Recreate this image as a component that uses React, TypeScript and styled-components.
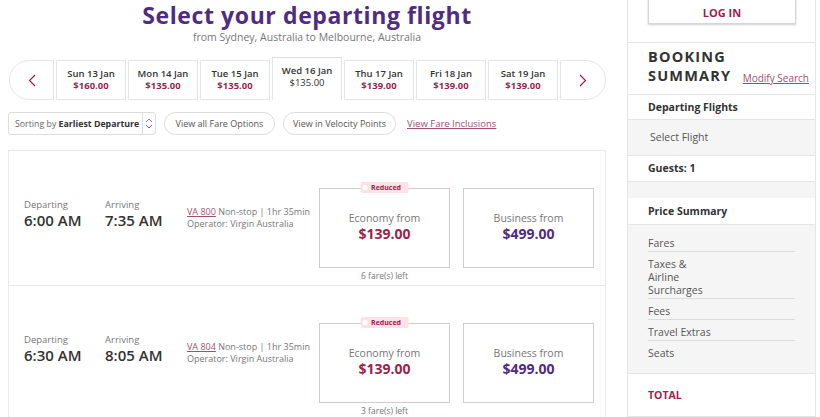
import React from "react";
import styled, { createGlobalStyle } from "styled-components";

const Global = createGlobalStyle`
  html, body { margin: 0; padding: 0; background: #fff; }
  body { font-family: "Open Sans", "DejaVu Sans", sans-serif; color: #333; width: 820px; height: 417px; overflow: hidden; }
  * { box-sizing: border-box; }
`;

const MAROON = "#9e1f4c";
const PURPLE = "#4f2c82";

const Page = styled.div`
  display: flex;
  align-items: flex-start;
  padding-left: 8px;
  gap: 21px;
`;

const Main = styled.main`
  width: 598px;
  display: flex;
  flex-direction: column;
`;

const Title = styled.h1`
  margin: 0;
  text-align: center;
  font-size: 23px;
  line-height: 31px;
  font-weight: 700;
  color: ${PURPLE};
  letter-spacing: 0.6px;
`;

const Subtitle = styled.p`
  margin: -1px 0 0;
  text-align: center;
  font-size: 10.5px;
  line-height: 14px;
  color: #777;
`;

const Strip = styled.div`
  margin-top: 13px;
  height: 43px;
  display: flex;
  align-items: flex-end;
  gap: 2px;
  padding-left: 1px;
`;

const ArrowBtn = styled.button<{ $side: "left" | "right" }>`
  width: ${(p) => (p.$side === "left" ? 45 : 46)}px;
  height: 40px;
  background: #fff;
  border: 1px solid #e6e6e6;
  border-radius: ${(p) => (p.$side === "left" ? "20px 0 0 20px" : "0 20px 20px 0")};
  display: flex;
  align-items: center;
  justify-content: center;
  padding: 0;
`;

const DateCell = styled.div<{ $active?: boolean }>`
  width: 70px;
  height: ${(p) => (p.$active ? 43 : 40)}px;
  border: 1px solid #e6e6e6;
  ${(p) => (p.$active ? "border-bottom: none; border-top-color: #ddd;" : "")}
  background: #fff;
  display: flex;
  flex-direction: column;
  align-items: center;
  justify-content: center;
  padding-bottom: ${(p) => (p.$active ? 5 : 0)}px;
`;

const DateLabel = styled.span`
  font-size: 9.5px;
  line-height: 12px;
  font-weight: 600;
  color: #333;
`;

const DatePrice = styled.span<{ $active?: boolean }>`
  font-size: 9.5px;
  line-height: 12px;
  font-weight: ${(p) => (p.$active ? 400 : 700)};
  color: ${(p) => (p.$active ? "#333" : MAROON)};
`;

const Toolbar = styled.div`
  margin-top: 12px;
  height: 23px;
  display: flex;
  align-items: center;
  gap: 8px;
`;

const Select = styled.div`
  width: 148px;
  height: 23px;
  border: 1px solid #ddd;
  border-radius: 3px;
  display: flex;
  align-items: center;
  font-size: 8.8px;
  color: #666;
`;

const SelectText = styled.span`
  flex: 1;
  padding-left: 6px;
  white-space: nowrap;
  b { color: #333; font-weight: 700; }
`;

const SelectIcon = styled.span`
  width: 13px;
  height: 100%;
  border-left: 1px solid #ddd;
  display: flex;
  align-items: center;
  justify-content: center;
`;

const Pill = styled.button<{ $w: number }>`
  width: ${(p) => p.$w}px;
  height: 23px;
  border: 1px solid #ddd;
  border-radius: 12px;
  background: #fff;
  font-family: inherit;
  font-size: 9px;
  color: #555;
  padding: 0;
  white-space: nowrap;
`;

const TextLink = styled.a<{ $size?: number }>`
  font-size: ${(p) => p.$size ?? 9.5}px;
  color: #a0506f;
  text-decoration: underline;
  white-space: nowrap;
`;

const List = styled.div`
  margin-top: 15px;
  border: 1px solid #e9e9e9;
  border-bottom: none;
`;

const Row = styled.div`
  height: 135px;
  display: flex;
  align-items: flex-start;
  padding: 30px 0 0 15px;
  border-bottom: 1px solid #e9e9e9;
`;

const TimeCol = styled.div<{ $w: number }>`
  width: ${(p) => p.$w}px;
  padding-top: 17px;
  display: flex;
  flex-direction: column;
`;

const TimeLabel = styled.span`
  font-size: 9.5px;
  line-height: 13px;
  color: #777;
`;

const TimeValue = styled.span`
  font-size: 15px;
  line-height: 19px;
  font-weight: 600;
  color: #333;
  white-space: nowrap;
`;

const InfoCol = styled.div`
  width: 132px;
  padding-top: 25px;
  font-size: 9px;
  line-height: 12px;
  color: #777;
  white-space: nowrap;
  a { color: #a0506f; text-decoration: underline; }
`;

const FareCol = styled.div`
  width: 131px;
  padding-top: 7px;
  display: flex;
  flex-direction: column;
  align-items: center;
  & + & { margin-left: 13px; }
`;

const FareBox = styled.div<{ $tone: "eco" | "bus" }>`
  position: relative;
  width: 100%;
  height: 80px;
  border: 1px solid ${(p) => (p.$tone === "eco" ? "#d9c9ce" : "#cfcfcf")};
  display: flex;
  flex-direction: column;
  align-items: center;
  justify-content: center;
  padding-bottom: 2px;
`;

const FareLabel = styled.span`
  font-size: 10.5px;
  line-height: 14px;
  color: #777;
`;

const FarePrice = styled.span<{ $tone: "eco" | "bus" }>`
  font-size: 14px;
  line-height: 18px;
  font-weight: 700;
  color: ${(p) => (p.$tone === "eco" ? MAROON : PURPLE)};
`;

const Tag = styled.span`
  position: absolute;
  top: -7px;
  left: 50%;
  transform: translateX(-50%);
  height: 11px;
  padding: 0 8px 0 11px;
  background: #fbe2e7;
  border-radius: 2px;
  font-size: 7px;
  line-height: 11px;
  font-weight: 700;
  color: ${MAROON};
  white-space: nowrap;
  &::before {
    content: "";
    position: absolute;
    left: 2px;
    top: 3px;
    width: 5px;
    height: 5px;
    border-radius: 50%;
    background: #fff;
  }
`;

const FaresLeft = styled.span`
  margin-top: 2px;
  font-size: 8.5px;
  line-height: 12px;
  color: #777;
`;

const Sidebar = styled.aside`
  width: 189px;
  height: 417px;
  border-left: 1px solid #e6e6e6;
  border-right: 1px solid #e6e6e6;
  display: flex;
  flex-direction: column;
`;

const LoginWrap = styled.div`
  height: 43px;
  padding-left: 20px;
  border-bottom: 1px solid #e6e6e6;
`;

const LoginBtn = styled.button`
  width: 148px;
  height: 25px;
  margin-top: -3px;
  background: #fff;
  border: 1px solid #d6d6d6;
  box-shadow: 0 1px 2px rgba(0,0,0,0.2);
  font-family: inherit;
  font-size: 11px;
  font-weight: 700;
  color: ${MAROON};
  padding: 3px 0 0;
  line-height: 20px;
`;

const BookingHead = styled.div`
  height: 52px;
  padding: 5px 6px 9px 20px;
  display: flex;
  align-items: flex-end;
  justify-content: space-between;
  border-bottom: 1px solid #e6e6e6;
`;

const BookingTitle = styled.h2`
  margin: 0;
  font-size: 14.5px;
  line-height: 19px;
  font-weight: 700;
  letter-spacing: 1.2px;
  color: #333;
`;

const Section = styled.div<{ $h: number; $grey?: boolean }>`
  height: ${(p) => p.$h}px;
  background: ${(p) => (p.$grey ? "#f5f5f5" : "#fff")};
  border-bottom: 1px solid #e6e6e6;
  display: flex;
  align-items: center;
  padding-left: 20px;
`;

const SectionTitle = styled.span<{ $color?: string }>`
  font-size: 10.5px;
  font-weight: 700;
  color: ${(p) => p.$color ?? "#333"};
`;

const PlainText = styled.span`
  font-size: 10.5px;
  color: #555;
  padding-left: 2px;
`;

const Gap = styled.div`
  height: 16px;
  background: #f5f5f5;
`;

const PriceList = styled.div`
  height: 150px;
  background: #f5f5f5;
  border-bottom: 1px solid #e6e6e6;
  padding: 12px 0 0 20px;
`;

const PriceItem = styled.div<{ $last?: boolean }>`
  width: 147px;
  padding: 0 0 1px;
  border-bottom: ${(p) => (p.$last ? "none" : "1px solid #dcdcdc")};
  font-size: 10.5px;
  line-height: 13px;
  color: #555;
  & + & { margin-top: 6px; }
`;

const Chevron = ({ dir }: { dir: "left" | "right" }) => (
  <svg width="8" height="13" viewBox="0 0 8 13" fill="none">
    <polyline
      points={dir === "left" ? "7,1 1.5,6.5 7,12" : "1,1 6.5,6.5 1,12"}
      stroke={MAROON}
      strokeWidth="1.2"
    />
  </svg>
);

const UpDown = () => (
  <svg width="8" height="13" viewBox="0 0 8 13" fill="none">
    <polyline points="1,5 4,2 7,5" stroke="#888" strokeWidth="1" />
    <polyline points="1,8 4,11 7,8" stroke="#a0506f" strokeWidth="1" />
  </svg>
);

const dates = [
  { d: "Sun 13 Jan", p: "$160.00" },
  { d: "Mon 14 Jan", p: "$135.00" },
  { d: "Tue 15 Jan", p: "$135.00" },
  { d: "Wed 16 Jan", p: "$135.00", active: true },
  { d: "Thu 17 Jan", p: "$139.00" },
  { d: "Fri 18 Jan", p: "$139.00" },
  { d: "Sat 19 Jan", p: "$139.00" },
];

const flights = [
  { dep: "6:00 AM", arr: "7:35 AM", no: "VA 800", left: 6 },
  { dep: "6:30 AM", arr: "8:05 AM", no: "VA 804", left: 3 },
];

export default function App() {
  return (
    <>
      <Global />
      <Page>
        <Main>
          <Title>Select your departing flight</Title>
          <Subtitle>from Sydney, Australia to Melbourne, Australia</Subtitle>
          <Strip>
            <ArrowBtn $side="left"><Chevron dir="left" /></ArrowBtn>
            {dates.map((x) => (
              <DateCell key={x.d} $active={x.active}>
                <DateLabel>{x.d}</DateLabel>
                <DatePrice $active={x.active}>{x.p}</DatePrice>
              </DateCell>
            ))}
            <ArrowBtn $side="right"><Chevron dir="right" /></ArrowBtn>
          </Strip>
          <Toolbar>
            <Select>
              <SelectText>Sorting by <b>Earliest Departure</b></SelectText>
              <SelectIcon><UpDown /></SelectIcon>
            </Select>
            <Pill $w={111}>View all Fare Options</Pill>
            <Pill $w={113}>View in Velocity Points</Pill>
            <TextLink style={{ marginLeft: 3 }}>View Fare Inclusions</TextLink>
          </Toolbar>
          <List>
            {flights.map((f) => (
              <Row key={f.no}>
                <TimeCol $w={81}>
                  <TimeLabel>Departing</TimeLabel>
                  <TimeValue>{f.dep}</TimeValue>
                </TimeCol>
                <TimeCol $w={82}>
                  <TimeLabel>Arriving</TimeLabel>
                  <TimeValue>{f.arr}</TimeValue>
                </TimeCol>
                <InfoCol>
                  <div><a>{f.no}</a> Non-stop | 1hr 35min</div>
                  <div>Operator: Virgin Australia</div>
                </InfoCol>
                <FareCol>
                  <FareBox $tone="eco">
                    <Tag>Reduced</Tag>
                    <FareLabel>Economy from</FareLabel>
                    <FarePrice $tone="eco">$139.00</FarePrice>
                  </FareBox>
                  <FaresLeft>{f.left} fare(s) left</FaresLeft>
                </FareCol>
                <FareCol>
                  <FareBox $tone="bus">
                    <FareLabel>Business from</FareLabel>
                    <FarePrice $tone="bus">$499.00</FarePrice>
                  </FareBox>
                </FareCol>
              </Row>
            ))}
          </List>
        </Main>
        <Sidebar>
          <LoginWrap><LoginBtn>LOG IN</LoginBtn></LoginWrap>
          <BookingHead>
            <BookingTitle>BOOKING<br />SUMMARY</BookingTitle>
            <TextLink $size={10}>Modify Search</TextLink>
          </BookingHead>
          <Section $h={25}><SectionTitle>Departing Flights</SectionTitle></Section>
          <Section $h={36} $grey><PlainText>Select Flight</PlainText></Section>
          <Section $h={26}><SectionTitle>Guests: 1</SectionTitle></Section>
          <Gap />
          <Section $h={27}><SectionTitle>Price Summary</SectionTitle></Section>
          <PriceList>
            <PriceItem>Fares</PriceItem>
            <PriceItem>Taxes &amp;<br />Airline<br />Surcharges</PriceItem>
            <PriceItem>Fees</PriceItem>
            <PriceItem>Travel Extras</PriceItem>
            <PriceItem $last>Seats</PriceItem>
          </PriceList>
          <Section $h={43}><SectionTitle $color={MAROON}>TOTAL</SectionTitle></Section>
        </Sidebar>
      </Page>
    </>
  );
}
